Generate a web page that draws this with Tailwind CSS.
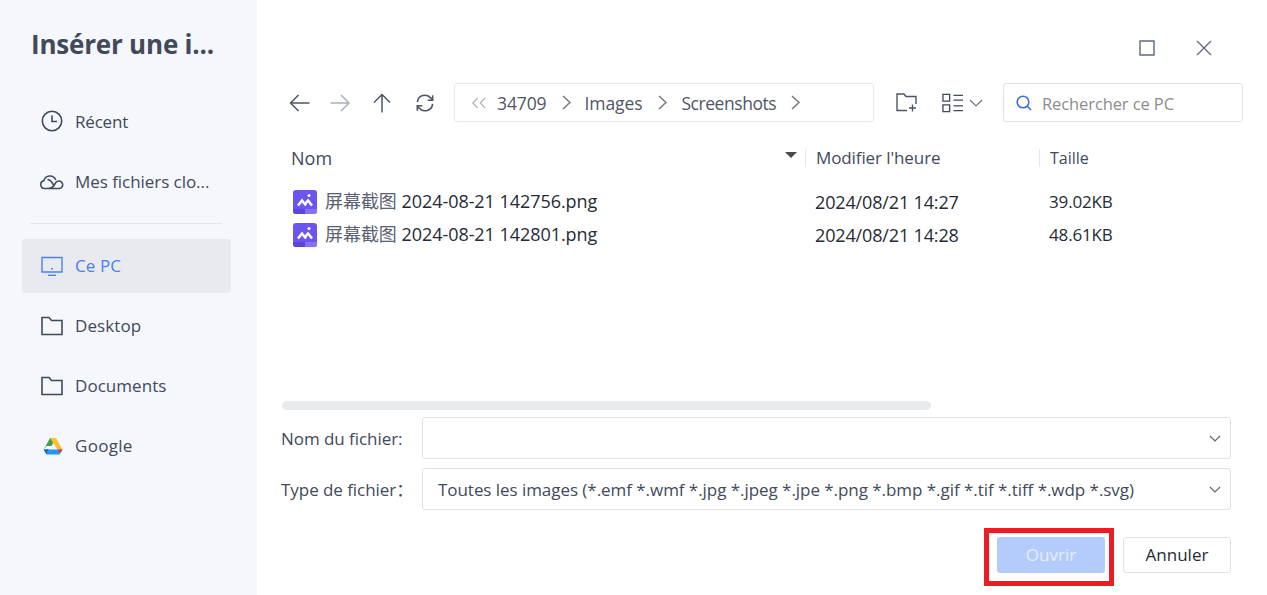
<!DOCTYPE html>
<html lang="fr">
<head>
<meta charset="utf-8">
<script src="https://cdn.jsdelivr.net/npm/@tailwindcss/browser@4"></script>
<title>Insérer une image</title>
</head>
<body class="m-0 overflow-hidden bg-white">
<div class="flex h-[595px] w-[1267px] font-['Open_Sans','Noto_Sans_CJK_SC',sans-serif] text-[#414a5c]">
  <aside class="flex w-[257px] shrink-0 flex-col bg-[#f5f7fa]">
    <h1 class="mt-[26px] pl-[31px] text-[26px] leading-[36px] font-bold tracking-[-0.2px] text-[#414a5c]">Insérer une i...</h1>
    <nav class="mt-[29px] flex flex-col text-[17px]">
      <div class="flex h-[60px] items-center pl-[41px] tracking-[-0.2px]">
        <svg class="mr-[12px] h-[22px] w-[22px]" viewBox="0 0 22 22" fill="none" stroke="#3f4a5e" stroke-width="1.6"><circle cx="11" cy="11" r="9.7"/><path d="M11 5.5V11.5H16"/></svg><span class="pt-px">Récent</span>
      </div>
      <div class="flex h-[60px] items-center pl-[40px] tracking-[-0.05px]">
        <svg class="mr-[11px] h-[18px] w-[24px]" viewBox="0 0 24 18" fill="none" stroke="#3f4a5e" stroke-width="1.5"><path d="M6 16.500H4.800A3.900 3.900 0 0 1 3.800 8.800 6.300 6.300 0 0 1 15.800 8"/><path d="M6 16.500H19.500A3.800 3.800 0 1 0 15.800 10.500L14 13.500Q12 16.500 8 16.500"/><path d="M7.500 7.500Q10 7.500 12 10.500L13.500 13"/></svg><span class="pt-px">Mes fichiers clo...</span>
      </div>
      <div class="mt-[12px] mr-[35px] ml-[30px] h-px bg-[#e3e5e9]"></div>
      <div class="mt-[15px] mr-[26px] ml-[22px] flex h-[54px] items-center rounded-[3px] bg-[#e8eaef] pl-[19px] tracking-[0.1px] text-[#4a80f5]">
        <svg class="mr-[12px] h-[22px] w-[22px]" viewBox="0 0 22 22" fill="none" stroke="#4a80f5" stroke-width="1.4"><path d="M1 2.5H21V17H1Z"/><path d="M7 20.300H15"/><path d="M10 13.700H12"/></svg>Ce PC
      </div>
      <div class="mt-[3px] flex h-[60px] items-center pl-[41px] tracking-[0.1px]">
        <svg class="mr-[12px] h-[20px] w-[22px]" viewBox="0 0 22 20" fill="none" stroke="#3f4a5e" stroke-width="1.6"><path d="M1 1.500H8L10.500 4.500H21V18.500H1Z"/></svg>Desktop
      </div>
      <div class="flex h-[60px] items-center pl-[41px] tracking-[0.05px]">
        <svg class="mr-[12px] h-[20px] w-[22px]" viewBox="0 0 22 20" fill="none" stroke="#3f4a5e" stroke-width="1.6"><path d="M1 1.500H8L10.500 4.500H21V18.500H1Z"/></svg>Documents
      </div>
      <div class="flex h-[60px] items-center pl-[43px] tracking-[0.3px]">
        <svg class="mr-[12px] h-[18px] w-[20px]" viewBox="0 0 20 18"><path d="M7 1H13L8.500 9H3.500L0.500 13Z" fill="#43a047"/><path d="M7 1H13L19.500 12.500H14.500Z" fill="#fbc02d"/><path d="M0.500 12.500L3.500 17.500L6 14L5.500 12Z" fill="#1565c0"/><path d="M5 12.500H19.500L16.500 17.500H3.500Z" fill="#2196f3"/><path d="M14.500 12.500H19.500L17 16.500Z" fill="#e53935"/></svg>Google
      </div>
    </nav>
  </aside>
  <main class="flex min-w-0 flex-1 flex-col pr-[24px] pl-[24px]">
    <div class="flex h-[83px] items-center justify-end gap-[41px] pt-[13px] pr-[31px]">
      <svg class="h-[16px] w-[16px]" viewBox="0 0 16 16" fill="none" stroke="#5d6880" stroke-width="1.4"><path d="M1 1H15V15H1Z"/></svg>
      <svg class="h-[16px] w-[16px]" viewBox="0 0 16 16" fill="none" stroke="#5d6880" stroke-width="1.3"><path d="M1 1L15 15M15 1L1 15"/></svg>
    </div>
    <div class="flex h-[39px] items-center">
      <div class="flex w-[173px] items-center">
        <svg class="ml-[8px] h-[18px] w-[21px]" viewBox="0 0 21 18" fill="none" stroke="#4b5568" stroke-width="1.5"><path d="M20.500 9H1.500M9.500 1L1.500 9L9.500 17"/></svg>
        <svg class="ml-[20px] h-[18px] w-[20px]" viewBox="0 0 20 18" fill="none" stroke="#a9afbd" stroke-width="1.5"><path d="M0.500 9H19M11 1L19 9L11 17"/></svg>
        <svg class="ml-[23px] h-[20px] w-[18px]" viewBox="0 0 18 20" fill="none" stroke="#4b5568" stroke-width="1.5"><path d="M9 19.500V1.500M1 9.500L9 1.500L17 9.500"/></svg>
        <svg class="ml-[25px] h-[18px] w-[18px]" viewBox="0 0 20 20" fill="none" stroke="#4b5568" stroke-width="1.8"><path d="M1.500 9A8.500 8.500 0 0 1 16.500 4.500L18.500 7"/><path d="M18.500 1.500V7H13"/><path d="M18.500 11A8.500 8.500 0 0 1 3.500 15.500L1.500 13"/><path d="M1.500 18.500V13H7"/></svg>
      </div>
      <div class="flex h-[39px] w-[420px] items-center rounded-[3px] border border-[#e8e9ec] pl-[17px] text-[17.5px] tracking-[-0.1px] text-[#4f5668]">
        <svg class="mr-[11px] h-[12px] w-[14px]" viewBox="0 0 15 12" fill="none" stroke="#aab0bb" stroke-width="1.3"><path d="M6 0.500L1 6L6 11.500M14 0.500L9 6L14 11.500"/></svg>
        <span class="pt-[2px]">34709</span>
        <svg class="mr-[14px] ml-[15px] h-[15px] w-[9px]" viewBox="0 0 9 15" fill="none" stroke="#6f7480" stroke-width="1.4"><path d="M1 1L8 7.500L1 14"/></svg>
        <span class="pt-[2px]">Images</span>
        <svg class="mr-[14px] ml-[16px] h-[15px] w-[9px]" viewBox="0 0 9 15" fill="none" stroke="#6f7480" stroke-width="1.4"><path d="M1 1L8 7.500L1 14"/></svg>
        <span class="pt-[2px] tracking-[-0.45px]">Screenshots</span>
        <svg class="ml-[15px] h-[15px] w-[9px]" viewBox="0 0 9 15" fill="none" stroke="#6f7480" stroke-width="1.4"><path d="M1 1L8 7.500L1 14"/></svg>
      </div>
      <svg class="ml-[22px] h-[19px] w-[21px]" viewBox="0 0 21 19" fill="none" stroke="#4b5568" stroke-width="1.4"><path d="M11 17.500H1V1H8L10 3.500H20V11"/><path d="M13 15H20M16.500 11.500V18.500"/></svg>
      <svg class="ml-[25px] h-[20px] w-[21px]" viewBox="0 0 22 20" fill="none" stroke="#3f4a5e" stroke-width="1.4"><path d="M1 1H8V8H1ZM1 12H8V19H1Z"/><path d="M12 2H22M12 7H22M12 13H22M12 18H22"/></svg>
      <svg class="ml-[6px] h-[8px] w-[14px]" viewBox="0 0 14 8" fill="none" stroke="#6a7283" stroke-width="1.2"><path d="M1 1L7 7L13 1"/></svg>
      <div class="ml-[20px] flex h-[39px] w-[240px] items-center rounded-[3px] border border-[#dfe1e5] pl-[12px] text-[16.5px] tracking-[-0.1px] text-[#8c8c8c]">
        <svg class="mr-[10px] h-[16px] w-[16px]" viewBox="0 0 16 16" fill="none" stroke="#3d6fe6" stroke-width="1.6"><circle cx="7" cy="7" r="5.800"/><path d="M11 11L15 15"/></svg><span class="pt-[3px]">Rechercher ce PC</span>
      </div>
    </div>
    <div class="mt-[24px] flex h-[24px] items-center">
      <div class="relative flex h-full w-[524px] items-center pl-[10px] text-[18px]">Nom
        <span class="absolute top-[6px] left-[504px] h-0 w-0 border-x-[6px] border-t-[6px] border-x-transparent border-t-[#4a4a4a]"></span>
      </div>
      <div class="flex h-[18px] w-[234px] items-center border-l border-[#e6e7ea] pl-[10px] text-[17px] tracking-[-0.1px]">Modifier l'heure</div>
      <div class="flex h-[18px] items-center border-l border-[#e6e7ea] pl-[10px] text-[16px]">Taille</div>
    </div>
    <div class="mt-[15px] flex flex-col text-[18px] tracking-[-0.15px] text-[#252b36]">
      <div class="flex h-[33px] items-center">
        <div class="flex w-[534px] items-center pl-[12px]">
          <svg class="mr-[8px] h-[24px] w-[24px]" viewBox="0 0 24 24"><rect width="24" height="24" rx="3" fill="#6a55f0"/><path d="M12 19H24V21A3 3 0 0 1 21 24H12Z" fill="#8672f7"/><path d="M0 19H12V24H3A3 3 0 0 1 0 21Z" fill="#5a46dc"/><path d="M5 15.500L9 10.500L13 15.500M12 14L15 10.500L19 15.500" fill="none" stroke="#fff" stroke-width="2.500"/><circle cx="16" cy="5.500" r="1.500" fill="#fff"/></svg>
          <span class="whitespace-nowrap tracking-[-0.05px]"><span class="text-[#5a6272]">屏幕截图</span> 2024-08-21 142756.png</span>
        </div>
        <div class="w-[234px] pt-px">2024/08/21 14:27</div>
        <div class="pt-px text-[17px]">39.02KB</div>
      </div>
      <div class="flex h-[33px] items-center">
        <div class="flex w-[534px] items-center pl-[12px]">
          <svg class="mr-[8px] h-[24px] w-[24px]" viewBox="0 0 24 24"><rect width="24" height="24" rx="3" fill="#6a55f0"/><path d="M12 19H24V21A3 3 0 0 1 21 24H12Z" fill="#8672f7"/><path d="M0 19H12V24H3A3 3 0 0 1 0 21Z" fill="#5a46dc"/><path d="M5 15.500L9 10.500L13 15.500M12 14L15 10.500L19 15.500" fill="none" stroke="#fff" stroke-width="2.500"/><circle cx="16" cy="5.500" r="1.500" fill="#fff"/></svg>
          <span class="whitespace-nowrap tracking-[-0.05px]"><span class="text-[#5a6272]">屏幕截图</span> 2024-08-21 142801.png</span>
        </div>
        <div class="w-[234px] pt-px">2024/08/21 14:28</div>
        <div class="pt-px text-[17px]">48.61KB</div>
      </div>
    </div>
    <div class="mt-[150px] ml-[1px] h-[9px] w-[649px] rounded-full bg-[#e9eaec]"></div>
    <div class="mt-[7px] flex items-center text-[17px] tracking-[-0.05px]">
      <label class="w-[141px] pt-px">Nom du fichier:</label>
      <div class="flex h-[42px] w-[809px] items-center justify-end rounded-[3px] border border-[#e0e1e4] pr-[9px]">
        <svg class="h-[7px] w-[12px]" viewBox="0 0 12 7" fill="none" stroke="#5d6678" stroke-width="1.2"><path d="M1 1L6 6L11 1"/></svg>
      </div>
    </div>
    <div class="mt-[9px] flex items-center text-[17px] tracking-[-0.05px]">
      <label class="w-[141px] pt-px">Type de fichier：</label>
      <div class="flex h-[42px] w-[809px] items-center justify-between rounded-[3px] border border-[#e0e1e4] pr-[9px] pl-[15px]">
        <span class="whitespace-nowrap pt-px">Toutes les images (*.emf *.wmf *.jpg *.jpeg *.jpe *.png *.bmp *.gif *.tif *.tiff *.wdp *.svg)</span>
        <svg class="h-[7px] w-[12px]" viewBox="0 0 12 7" fill="none" stroke="#5d6678" stroke-width="1.2"><path d="M1 1L6 6L11 1"/></svg>
      </div>
    </div>
    <div class="mt-[18px] flex items-start justify-end gap-[9px] pr-[12px] text-[17px]">
      <div class="border-[5px] border-[#ed1c24] pt-[4px] pr-[4px] pb-[8px] pl-[8px]">
        <button class="flex h-[36px] w-[108px] items-center justify-center rounded-[3px] bg-[#b3ccfc] text-[#e6eefe]">Ouvrir</button>
      </div>
      <button class="mt-[9px] flex h-[36px] w-[108px] items-center justify-center rounded-[3px] border border-[#e0e1e4] text-[#252b36]">Annuler</button>
    </div>
  </main>
</div>
</body>
</html>
